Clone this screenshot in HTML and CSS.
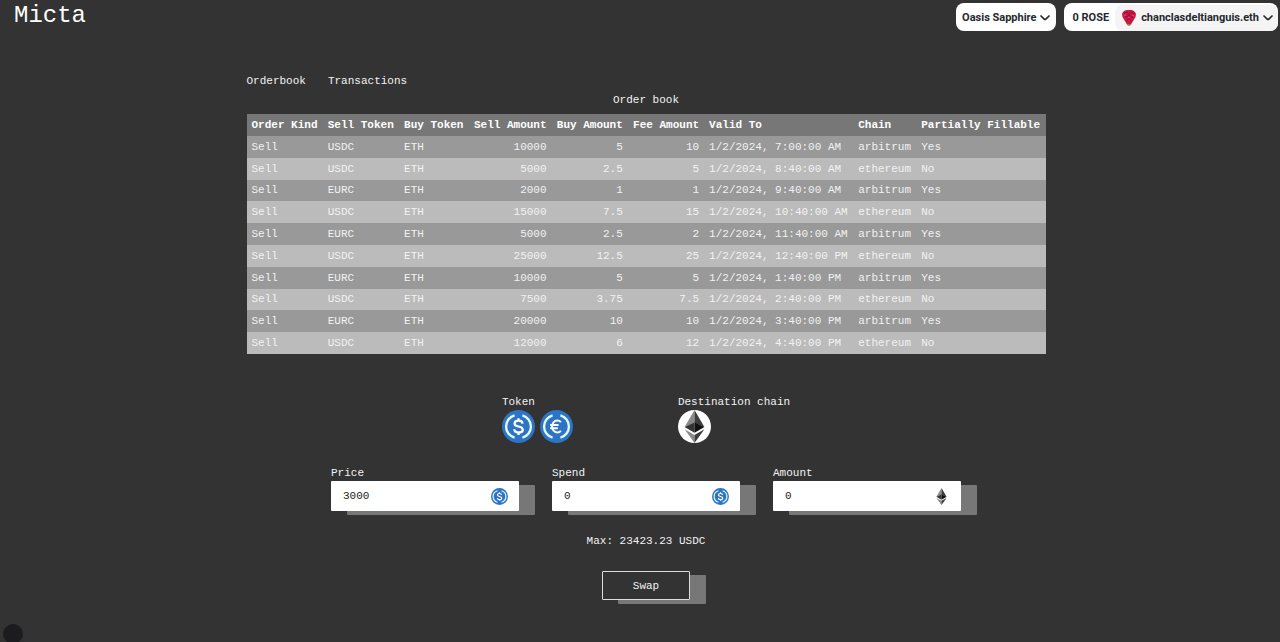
FILE: index.html
```html
<!DOCTYPE html>
<html lang="en">
<head>
<meta charset="utf-8">
<meta name="viewport" content="width=device-width, initial-scale=1">
<title>Micta</title>
<link rel="stylesheet" href="styles.css">
</head>
<body>
<svg class="sprite" aria-hidden="true">
  <symbol id="usdc" viewBox="0 0 32 32">
    <circle cx="16" cy="16" r="16" fill="#2d74c4"/>
    <path d="M12.2 5.200A11.200 11.200 0 0 0 12.2 26.800M19.8 5.200A11.200 11.200 0 0 1 19.8 26.800" fill="none" stroke="#e0faff" stroke-width="2.300"/>
    <path d="M19.9 13.2C19.8 11.2 18.3 10.3 16 10.3S12.2 11.4 12.2 13.1C12.2 15 13.8 15.6 16 16S20.1 17.2 20.1 19.1 18.3 21.8 16 21.8 12 20.7 11.9 18.7M16 8V10.3M16 21.8V24.2" fill="none" stroke="#fff" stroke-width="2.200"/>
  </symbol>
  <symbol id="eurc" viewBox="0 0 32 32">
    <circle cx="16" cy="16" r="16" fill="#2d74c4"/>
    <path d="M12.2 5.200A11.200 11.200 0 0 0 12.2 26.800M19.8 5.200A11.200 11.200 0 0 1 19.8 26.800" fill="none" stroke="#e0faff" stroke-width="2.300"/>
    <path d="M20.3 11.800A5.1 5.8 0 1 0 20.3 20.200M9.800 14.5H18M9.800 17.7H17.3" fill="none" stroke="#fff" stroke-width="2"/>
  </symbol>
  <symbol id="eth" viewBox="0 0 20 32">
    <path d="M10 0V12.5L.4 16.5z" fill="#8a8a8a"/>
    <path d="M10 0V12.5L19.6 16.5z" fill="#3c3c3b"/>
    <path d="M.4 16.5L10 12V22z" fill="#343434"/>
    <path d="M19.6 16.5L10 12V22z" fill="#101010"/>
    <path d="M.4 18.6L10 24.2V32z" fill="#8a8a8a"/>
    <path d="M19.6 18.6L10 24.2V32z" fill="#3c3c3b"/>
  </symbol>
  <symbol id="chevron" viewBox="0 0 10 6">
    <path d="M1 1L4.200 4.100Q5 4.800 5.800 4.100L9 1" fill="none" stroke="#25292e" stroke-width="1.700" stroke-linecap="round"/>
  </symbol>
</svg>

<header class="topbar">
  <h1 class="brand">Micta</h1>
  <div class="wallet">
    <button class="wallet-button" type="button">Oasis Sapphire <svg class="chevron"><use href="#chevron"/></svg></button>
    <button class="wallet-button account" type="button">
      <span class="balance">0 ROSE</span>
      <span class="profile">
        <svg class="avatar" viewBox="0 0 16 18" aria-hidden="true">
          <path d="M5 13H11L10 16 8 17 6 16z" fill="#a07a38"/>
          <path d="M3 2L5.500 1H10.500L13 2 15 4.500 14.500 8 11.500 13 10 15H6L4.500 13 1.500 8 1 4.500z" fill="#c91846"/>
          <path d="M3 5L5 3 8 5.500 11 3 13 5M4 8.500L8 6.500 12 8.500M5.500 12L8 9.500 10.500 12" fill="none" stroke="#8d1238" stroke-width="1"/>
          <path d="M3 6.500L5 5.500M11 6L13 7M8 7.500V9" fill="none" stroke="#f04a74" stroke-width="1"/>
        </svg>
        chanclasdeltianguis.eth <svg class="chevron"><use href="#chevron"/></svg>
      </span>
    </button>
  </div>
</header>

<main class="content">
  <section class="book">
    <nav class="tabs"><a href="#orderbook">Orderbook</a><a href="#transactions">Transactions</a></nav>
    <table class="orders" id="orderbook">
      <caption>Order book</caption>
      <thead>
        <tr><th>Order Kind</th><th>Sell Token</th><th>Buy Token</th><th class="num">Sell Amount</th><th class="num">Buy Amount</th><th class="num">Fee Amount</th><th>Valid To</th><th>Chain</th><th>Partially Fillable</th></tr>
      </thead>
      <tbody>
        <tr><td>Sell</td><td>USDC</td><td>ETH</td><td class="num">10000</td><td class="num">5</td><td class="num">10</td><td>1/2/2024, 7:00:00 AM</td><td>arbitrum</td><td>Yes</td></tr>
        <tr><td>Sell</td><td>USDC</td><td>ETH</td><td class="num">5000</td><td class="num">2.5</td><td class="num">5</td><td>1/2/2024, 8:40:00 AM</td><td>ethereum</td><td>No</td></tr>
        <tr><td>Sell</td><td>EURC</td><td>ETH</td><td class="num">2000</td><td class="num">1</td><td class="num">1</td><td>1/2/2024, 9:40:00 AM</td><td>arbitrum</td><td>Yes</td></tr>
        <tr><td>Sell</td><td>USDC</td><td>ETH</td><td class="num">15000</td><td class="num">7.5</td><td class="num">15</td><td>1/2/2024, 10:40:00 AM</td><td>ethereum</td><td>No</td></tr>
        <tr><td>Sell</td><td>EURC</td><td>ETH</td><td class="num">5000</td><td class="num">2.5</td><td class="num">2</td><td>1/2/2024, 11:40:00 AM</td><td>arbitrum</td><td>Yes</td></tr>
        <tr><td>Sell</td><td>USDC</td><td>ETH</td><td class="num">25000</td><td class="num">12.5</td><td class="num">25</td><td>1/2/2024, 12:40:00 PM</td><td>ethereum</td><td>No</td></tr>
        <tr><td>Sell</td><td>EURC</td><td>ETH</td><td class="num">10000</td><td class="num">5</td><td class="num">5</td><td>1/2/2024, 1:40:00 PM</td><td>arbitrum</td><td>Yes</td></tr>
        <tr><td>Sell</td><td>USDC</td><td>ETH</td><td class="num">7500</td><td class="num">3.75</td><td class="num">7.5</td><td>1/2/2024, 2:40:00 PM</td><td>ethereum</td><td>No</td></tr>
        <tr><td>Sell</td><td>EURC</td><td>ETH</td><td class="num">20000</td><td class="num">10</td><td class="num">10</td><td>1/2/2024, 3:40:00 PM</td><td>arbitrum</td><td>Yes</td></tr>
        <tr><td>Sell</td><td>USDC</td><td>ETH</td><td class="num">12000</td><td class="num">6</td><td class="num">12</td><td>1/2/2024, 4:40:00 PM</td><td>ethereum</td><td>No</td></tr>
      </tbody>
    </table>
  </section>

  <form class="swap">
    <div class="choices">
      <fieldset class="choice">
        <legend>Token</legend>
        <div class="coins">
          <button class="coin" type="button" aria-label="USDC"><svg><use href="#usdc"/></svg></button>
          <button class="coin" type="button" aria-label="EURC"><svg><use href="#eurc"/></svg></button>
        </div>
      </fieldset>
      <fieldset class="choice">
        <legend>Destination chain</legend>
        <div class="coins">
          <button class="coin coin-light" type="button" aria-label="Ethereum"><svg><use href="#eth"/></svg></button>
        </div>
      </fieldset>
    </div>
    <div class="fields">
      <div class="field">
        <label for="price">Price</label>
        <div class="box"><input id="price" type="text" value="3000"><svg class="unit"><use href="#usdc"/></svg></div>
      </div>
      <div class="field">
        <label for="spend">Spend</label>
        <div class="box"><input id="spend" type="text" value="0"><svg class="unit"><use href="#usdc"/></svg></div>
      </div>
      <div class="field">
        <label for="amount">Amount</label>
        <div class="box"><input id="amount" type="text" value="0"><svg class="unit"><use href="#eth"/></svg></div>
      </div>
    </div>
    <p class="max">Max: 23423.23 USDC</p>
    <button class="submit" type="button">Swap</button>
  </form>
</main>
<button class="corner" type="button" aria-label="Open tools"></button>
</body>
</html>
```
FILE: styles.css
```css
* {
  box-sizing: border-box;
}

body {
  min-height: 100vh;
  margin: 0;
  padding-left: 12px;
  background: #333;
  color: #f2f2f2;
  font: 11px/12px "Liberation Mono", "Courier New", monospace;
}

button,
input {
  margin: 0;
  padding: 0;
  border: 0;
  color: inherit;
  font: inherit;
}

button {
  cursor: pointer;
}

svg {
  display: block;
}

.sprite {
  position: absolute;
  width: 0;
  height: 0;
}

.topbar {
  display: flex;
  justify-content: space-between;
  align-items: flex-start;
  padding: 3px 2px 0;
}

.brand {
  margin: 0;
  color: #fff;
  font-size: 24px;
  font-weight: 400;
  line-height: 26px;
}

.wallet {
  display: flex;
  gap: 8px;
}

.wallet-button {
  display: flex;
  align-items: center;
  gap: 4px;
  height: 28px;
  padding: 1px 6px 0;
  border-radius: 8px;
  background: #fff;
  color: #25292e;
  font: 700 11px/14px Roboto, sans-serif;
}

.chevron {
  width: 10px;
  height: 6px;
}

.account {
  padding: 1px 0 0 8px;
  gap: 6px;
}

.profile {
  display: flex;
  align-items: center;
  gap: 4px;
  height: 26px;
  padding: 0 5px 0 6px;
  border-radius: 8px;
  background: #f4f4f4;
}

.avatar {
  width: 16px;
  height: 18px;
}

.content {
  display: flex;
  flex-direction: column;
  align-items: center;
  padding: 44px 0 24px;
}

.book {
  width: 100%;
  max-width: 799px;
}

.tabs {
  display: flex;
  gap: 22px;
}

.tabs a {
  color: inherit;
  text-decoration: none;
}

.orders {
  width: 100%;
  height: 240px;
  border-collapse: collapse;
  white-space: nowrap;
}

.orders caption {
  padding: 7px 0 8px;
}

.orders th,
.orders td {
  padding: 4px 5px;
  text-align: left;
}

.orders .num {
  text-align: right;
}

.orders th {
  padding-top: 5px;
  padding-bottom: 5px;
  color: #fff;
}

.orders thead tr {
  background: #777;
}

.orders tbody tr {
  background: #999;
}

.orders tbody tr:nth-child(even) {
  background: #bbb;
}

.swap {
  display: flex;
  flex-direction: column;
  align-items: center;
  padding-top: 42px;
}

.choices {
  display: flex;
  gap: 105px;
}

.choice {
  min-width: 0;
  margin: 0;
  padding: 0;
  border: 0;
}

.choice legend {
  padding: 0;
}

.coins {
  display: flex;
  gap: 5px;
  padding-top: 2px;
}

.coin {
  width: 33px;
  height: 33px;
  border-radius: 50%;
  background: none;
}

.coin svg {
  width: 100%;
  height: 100%;
}

.coin-light {
  background: #fff;
}

.fields {
  display: flex;
  flex-wrap: wrap;
  gap: 33px;
  padding-top: 24px;
}

.field {
  width: 188px;
}

.field label {
  display: block;
  padding-bottom: 2px;
}

.box {
  display: flex;
  align-items: center;
  height: 30px;
  padding: 0 11px 0 12px;
  border-radius: 1px;
  background: #fff;
  box-shadow: 16px 4px #777;
  color: #222;
}

.box input {
  flex: 1;
  min-width: 0;
  background: none;
  outline: none;
}

.unit {
  width: 17px;
  height: 17px;
}

.max {
  margin: 24px 0;
}

.submit {
  width: 88px;
  height: 29px;
  border: 1px solid #ddd;
  border-radius: 1px;
  background: #333;
  box-shadow: 16px 4px #777;
}

.corner {
  position: fixed;
  bottom: -2px;
  left: 3px;
  width: 20px;
  height: 20px;
  border-radius: 50%;
  background: #1c1c20;
}
```
